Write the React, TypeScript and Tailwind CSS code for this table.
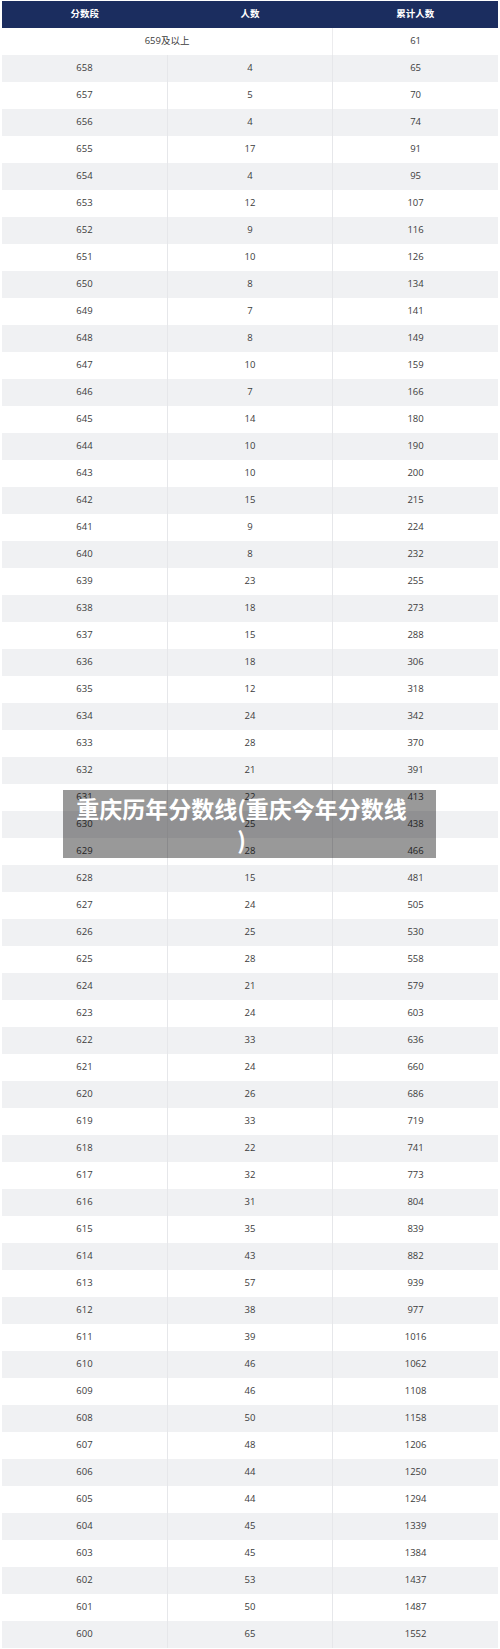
const ROWS: [number, number, number][] = [
  [658, 4, 65], [657, 5, 70], [656, 4, 74], [655, 17, 91], [654, 4, 95],
  [653, 12, 107], [652, 9, 116], [651, 10, 126], [650, 8, 134], [649, 7, 141],
  [648, 8, 149], [647, 10, 159], [646, 7, 166], [645, 14, 180], [644, 10, 190],
  [643, 10, 200], [642, 15, 215], [641, 9, 224], [640, 8, 232], [639, 23, 255],
  [638, 18, 273], [637, 15, 288], [636, 18, 306], [635, 12, 318], [634, 24, 342],
  [633, 28, 370], [632, 21, 391], [631, 22, 413], [630, 25, 438], [629, 28, 466],
  [628, 15, 481], [627, 24, 505], [626, 25, 530], [625, 28, 558], [624, 21, 579],
  [623, 24, 603], [622, 33, 636], [621, 24, 660], [620, 26, 686], [619, 33, 719],
  [618, 22, 741], [617, 32, 773], [616, 31, 804], [615, 35, 839], [614, 43, 882],
  [613, 57, 939], [612, 38, 977], [611, 39, 1016], [610, 46, 1062], [609, 46, 1108],
  [608, 50, 1158], [607, 48, 1206], [606, 44, 1250], [605, 44, 1294], [604, 45, 1339],
  [603, 45, 1384], [602, 53, 1437], [601, 50, 1487], [600, 65, 1552],
];

export default function App() {
  return (
    <div
      className="relative w-[500px] bg-white px-[2px] pt-[1px] text-[#3c3c3c]"
      style={{ fontFamily: '"Open Sans", "Noto Sans CJK SC", sans-serif' }}
    >
      <table className="w-full table-fixed border-collapse text-center text-[9.5px]">
        <thead>
          <tr className="h-[27px] bg-[#1b2d5f] text-white">
            <th className="font-bold">分数段</th>
            <th className="font-bold">人数</th>
            <th className="font-bold">累计人数</th>
          </tr>
        </thead>
        <tbody>
          <tr className="h-[27px] bg-white">
            <td colSpan={2}>659及以上</td>
            <td className="border-l border-[#ececee]">61</td>
          </tr>
          {ROWS.map(([score, count, total], i) => (
            <tr key={score} className={i % 2 === 0 ? 'h-[27px] bg-[#f0f1f3]' : 'h-[27px] bg-white'}>
              <td>{score}</td>
              <td className="border-l border-[#e6e7ea]">{count}</td>
              <td className="border-l border-[#e6e7ea]">{total}</td>
            </tr>
          ))}
        </tbody>
      </table>

      {/* title overlay */}
      <div className="absolute left-[63px] top-[790px] w-[373px] bg-black/40 py-[3px] pl-[10px] pr-[26px] text-center">
        <p
          className="break-all text-[23px] font-bold leading-[31px] text-white [line-break:anywhere]"
          style={{ fontFamily: '"Noto Sans CJK SC", sans-serif' }}
        >
          重庆历年分数线(重庆今年分数线)
        </p>
      </div>
    </div>
  );
}
